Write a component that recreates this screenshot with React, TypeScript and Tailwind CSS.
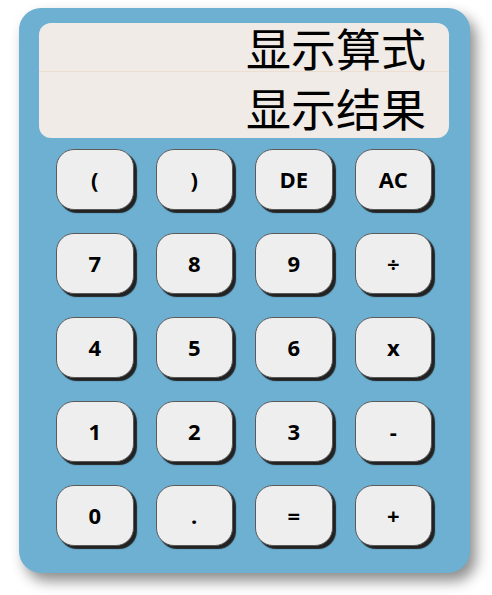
const KEYS = ["(", ")", "DE", "AC", "7", "8", "9", "÷", "4", "5", "6", "x", "1", "2", "3", "-", "0", ".", "=", "+"];

export default function App() {
  return (
    <div className="w-[492px] h-[595px] bg-white pt-[8px] pl-[19px]">
      {/* calculator body */}
      <div className="w-[451px] h-[565px] rounded-[22px] bg-[#6db0d2] shadow-[6px_8px_14px_rgba(0,0,0,0.45)] pt-[15px] px-[20px]">
        {/* display */}
        <div className="w-[410px] h-[115px] rounded-[12px] bg-[#f0ebe6] flex flex-col font-['Noto_Sans_CJK_SC',sans-serif] text-[45px] text-black">
          <div className="h-[49px] border-b border-[#ecdfd0] flex items-center justify-end pr-[23px] leading-none">
            显示算式
          </div>
          <div className="h-[65px] flex items-start justify-end pr-[23px] pt-[13px] leading-none">
            显示结果
          </div>
        </div>

        {/* keys */}
        <div className="grid grid-cols-4 w-[376px] gap-x-[22px] gap-y-[23px] mt-[11px] ml-[17px]">
          {KEYS.map((k) => (
            <button
              key={k}
              className="h-[61px] rounded-[18px] bg-[#eeeeee] border border-[#5a5a5a] shadow-[3px_3px_1px_#222222] flex items-center justify-center font-['Open_Sans',sans-serif] font-bold text-[22px] text-black"
            >
              {k}
            </button>
          ))}
        </div>
      </div>
    </div>
  );
}
